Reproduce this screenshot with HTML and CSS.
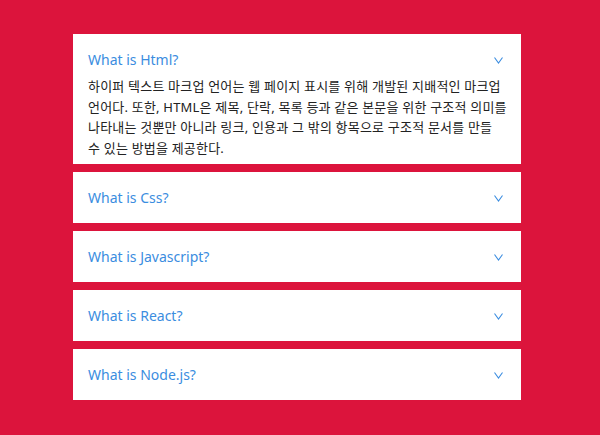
FILE: index.html
```html
<!DOCTYPE html>
<html lang="ko">
<head>
<meta charset="UTF-8" />
<meta name="viewport" content="width=device-width, initial-scale=1" />
<title>FAQ</title>
<link rel="stylesheet" href="styles.css">
</head>
<body>

<main class="faq">
  <section class="item open">
    <div class="question">
      <span>What is Html?</span>
      <svg class="chev" width="9" height="7" viewBox="0 0 9 7"><polyline points="0.5,0.5 4.5,6 8.5,0.5" /></svg>
    </div>
    <p class="answer">하이퍼 텍스트 마크업 언어는 웹 페이지 표시를 위해 개발된 지배적인 마크업 언어다. 또한, HTML은 제목, 단락, 목록 등과 같은 본문을 위한 구조적 의미를 나타내는 것뿐만 아니라 링크, 인용과 그 밖의 항목으로 구조적 문서를 만들 수 있는 방법을 제공한다.</p>
  </section>

  <section class="item">
    <div class="question">
      <span>What is Css?</span>
      <svg class="chev" width="9" height="7" viewBox="0 0 9 7"><polyline points="0.5,0.5 4.5,6 8.5,0.5" /></svg>
    </div>
  </section>

  <section class="item">
    <div class="question">
      <span>What is Javascript?</span>
      <svg class="chev" width="9" height="7" viewBox="0 0 9 7"><polyline points="0.5,0.5 4.5,6 8.5,0.5" /></svg>
    </div>
  </section>

  <section class="item">
    <div class="question">
      <span>What is React?</span>
      <svg class="chev" width="9" height="7" viewBox="0 0 9 7"><polyline points="0.5,0.5 4.5,6 8.5,0.5" /></svg>
    </div>
  </section>

  <section class="item">
    <div class="question">
      <span>What is Node.js?</span>
      <svg class="chev" width="9" height="7" viewBox="0 0 9 7"><polyline points="0.5,0.5 4.5,6 8.5,0.5" /></svg>
    </div>
  </section>
</main>

</body>
</html>
```

FILE: styles.css
```css
body {
  background-color: #dc143c;
  font-family: "Noto Sans", "Noto Sans CJK KR", sans-serif;
  margin: 0;
  padding: 34px 6px 34px 0;
}
.faq {
  width: 448px;
  margin: 0 auto;
  display: flex;
  flex-direction: column;
  gap: 8px;
}
.item {
  background: #fff;
}
.question {
  display: flex;
  justify-content: space-between;
  align-items: center;
  padding: 16px 18px 15px 15px;
  color: #3b8de0;
  font-size: 14px;
  line-height: 20px;
}
.item.open .question {
  padding-bottom: 6px;
}
.chev {
  fill: none;
  stroke: #3b8de0;
  stroke-width: 1.1;
}
.answer {
  margin: 0;
  padding: 0 14px 6px 15px;
  color: #222;
  font-size: 13px;
  line-height: 20.5px;
  letter-spacing: 0.2px;
  word-break: keep-all;
}
```
